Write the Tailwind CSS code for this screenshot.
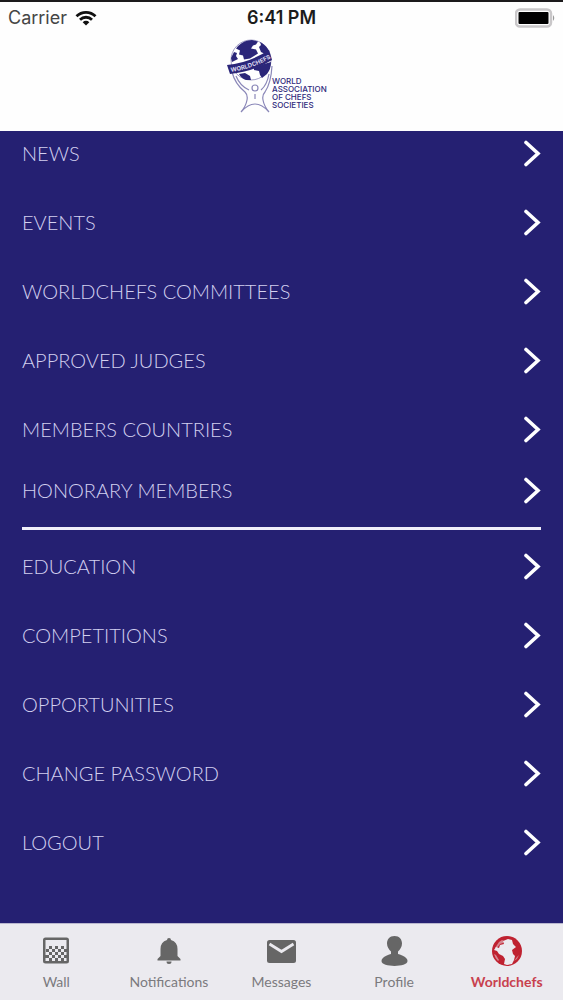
<!DOCTYPE html>
<html lang="en">
<head>
  <meta charset="UTF-8">
  <meta name="viewport" content="width=device-width, initial-scale=1.0">
  <title>Worldchefs</title>
  <script src="https://cdn.jsdelivr.net/npm/@tailwindcss/browser@4"></script>
</head>
<body class="min-h-screen flex flex-col bg-[#252072] font-['Lato',sans-serif]">
  <!-- Shared icons -->
  <svg class="hidden">
    <symbol id="chevron" viewBox="0 0 18 28">
      <path d="M3 3.500 15 14.500 3 25.500" fill="none" stroke="currentColor" stroke-width="3.600" stroke-linecap="round" stroke-linejoin="miter"/>
    </symbol>
  </svg>

  <!-- Header -->
  <header class="bg-[#fefefe] border-t-2 border-[#1c1a1c] h-[131px]">
    <div class="grid grid-cols-3 items-center h-8 px-2 font-['Inter',sans-serif] text-[#1c1c1c]">
      <div class="flex items-center gap-2">
        <span class="text-lg text-[#454545]">Carrier</span>
        <svg class="w-[22px] h-4" viewBox="0 0 22 16" fill="none" stroke="#111" stroke-width="2.8">
          <path d="M1.5 6.2a13.5 13.5 0 0 1 19 0"/>
          <path d="M5 9.7a8.6 8.6 0 0 1 12 0"/>
          <path d="M11 15.5 7.7 12.2a4.7 4.7 0 0 1 6.6 0z" fill="#111" stroke="none"/>
        </svg>
      </div>
      <span class="text-center text-lg font-semibold">6:41 PM</span>
      <svg class="justify-self-end w-10 h-5" viewBox="0 0 40 20">
        <rect x="1" y="1.5" width="35" height="17" rx="4" fill="#fff" stroke="#c9c7c9" stroke-width="2.5"/>
        <rect x="3.5" y="4" width="30" height="12" rx="1" fill="#000"/>
        <path d="M38 7q2.500 3 0 6z" fill="#999"/>
      </svg>
    </div>
    <div class="flex justify-center pt-1">
      <svg class="w-[110px] h-[76px]" viewBox="0 0 110 76" role="img" aria-label="World Association of Chefs Societies">
        <g fill="none" stroke="#8a87b8" stroke-width="1.200">
          <path d="M5 34Q8 46 18 54q3 3 2 8-1 6-6 12 7-8 14-8t14 8q-5-6-6-12-1-5 2-8 6-9 7-26"/>
          <path d="M9 38q4 10 13 14M42 36q-2 11-8 16"/>
          <circle cx="28" cy="50" r="3" fill="#fff"/>
          <path d="M28 56v5"/>
        </g>
        <circle cx="24" cy="22" r="20" fill="#fff" stroke="#8a87b8" stroke-width=".8"/>
        <g fill="#2b2679">
          <path d="M11 8Q17 2 25 2l6 1.500-2 3-3 1-2 3 5 1 2 4-8 5-6 1-1-4-4-1 1-4-4-2z"/>
          <path d="M33 4q6 3 9 9l-4 3-4-2-2-5 2-2z"/>
          <path d="M4 20l3-6 3 1-1 3 2 3-6 3z"/>
          <path d="M12 36l6-1 5 3 1 4-5 0q-5-2-7-6z"/>
          <path d="M27 30l10-4 7-2q0 7-4 12l-5 4-2-3-1-4-5-1z"/>
        </g>
        <path d="M0 27Q22 25 42 12l3 10Q26 34 3 36z" fill="#2b2679"/>
        <path id="band" d="M4 34Q25 31 46 19" fill="none"/>
        <text font-family="Inter, sans-serif" font-size="6" font-weight="700" fill="#dddbf0"><textPath href="#band">WORLDCHEFS</textPath></text>
        <g font-family="Inter, sans-serif" font-size="8" font-weight="500" fill="#2f2a7c">
          <text x="45" y="46">WORLD</text>
          <text x="45" y="54">ASSOCIATION</text>
          <text x="45" y="62">OF CHEFS</text>
          <text x="45" y="70">SOCIETIES</text>
        </g>
      </svg>
    </div>
  </header>

  <!-- Menu -->
  <main class="flex-1 px-[22px] text-xl font-light text-[#d3d0f0]">
    <nav aria-label="Menu">
      <div class="flex flex-col gap-[25px]">
        <a href="#news" class="flex items-center justify-between h-11">NEWS<svg class="w-[18px] h-7 text-white"><use href="#chevron"/></svg></a>
        <a href="#events" class="flex items-center justify-between h-11">EVENTS<svg class="w-[18px] h-7 text-white"><use href="#chevron"/></svg></a>
        <a href="#committees" class="flex items-center justify-between h-11">WORLDCHEFS COMMITTEES<svg class="w-[18px] h-7 text-white"><use href="#chevron"/></svg></a>
        <a href="#judges" class="flex items-center justify-between h-11">APPROVED JUDGES<svg class="w-[18px] h-7 text-white"><use href="#chevron"/></svg></a>
        <a href="#countries" class="flex items-center justify-between h-11">MEMBERS COUNTRIES<svg class="w-[18px] h-7 text-white"><use href="#chevron"/></svg></a>
        <a href="#honorary" class="flex items-center justify-between h-11 -mt-2">HONORARY MEMBERS<svg class="w-[18px] h-7 text-white"><use href="#chevron"/></svg></a>
      </div>
      <hr class="mt-[15px] mb-[14px] border-t-3 border-[#f0effa]">
      <div class="flex flex-col gap-[25px]">
        <a href="#education" class="flex items-center justify-between h-11">EDUCATION<svg class="w-[18px] h-7 text-white"><use href="#chevron"/></svg></a>
        <a href="#competitions" class="flex items-center justify-between h-11">COMPETITIONS<svg class="w-[18px] h-7 text-white"><use href="#chevron"/></svg></a>
        <a href="#opportunities" class="flex items-center justify-between h-11">OPPORTUNITIES<svg class="w-[18px] h-7 text-white"><use href="#chevron"/></svg></a>
        <a href="#password" class="flex items-center justify-between h-11">CHANGE PASSWORD<svg class="w-[18px] h-7 text-white"><use href="#chevron"/></svg></a>
        <a href="#logout" class="flex items-center justify-between h-11">LOGOUT<svg class="w-[18px] h-7 text-white"><use href="#chevron"/></svg></a>
      </div>
    </nav>
  </main>

  <!-- Tab bar -->
  <footer class="bg-[#ebeaef] border-t border-[#b9b7cf]">
    <nav class="grid grid-cols-5 h-[76px] pt-3 text-sm text-[#7b7a7e]" aria-label="Tabs">
      <a href="#wall" class="flex flex-col items-center gap-1">
        <svg class="w-8 h-8" viewBox="0 0 32 32" fill="#666">
          <path fill-rule="evenodd" d="M5.500 1.500h21a2.500 2.500 0 0 1 2.500 2.500v21a2.500 2.500 0 0 1-2.500 2.500h-21A2.500 2.500 0 0 1 3 25v-21A2.500 2.500 0 0 1 5.500 1.500zM5.500 4v21h21V4z"/>
          <path d="M9 10h3v3H9zM15 10h3v3h-3zM21 10h3v3h-3zM6 13h3v3H6zM12 13h3v3h-3zM18 13h3v3h-3zM24 13h3v3h-3zM9 16h3v3H9zM15 16h3v3h-3zM21 16h3v3h-3zM5 19h4v3H5zM12 19h3v3h-3zM18 19h3v3h-3zM24 19h3v3h-3zM9 22h3v4H9zM15 22h3v4h-3zM21 22h3v4h-3z"/>
        </svg>
        Wall
      </a>
      <a href="#notifications" class="flex flex-col items-center gap-1">
        <svg class="w-8 h-8" viewBox="0 0 32 32" fill="#666">
          <path d="M16 2a2 2 0 0 1 2 2q6.500 2 6.500 9v7l3 3v1.500h-23V23l3-3v-7q0-7 6.500-9a2 2 0 0 1 2-2z"/>
          <path d="M13.500 25.500h5a2.500 2.500 0 0 1-5 0z"/>
        </svg>
        Notifications
      </a>
      <a href="#messages" class="flex flex-col items-center gap-1">
        <svg class="w-8 h-8" viewBox="0 0 32 32">
          <rect x="2" y="4" width="29" height="23" rx="2.500" fill="#666"/>
          <path d="M4.500 8 16.500 15.500 28.500 8" fill="none" stroke="#ebeaef" stroke-width="2.800"/>
        </svg>
        Messages
      </a>
      <a href="#profile" class="flex flex-col items-center gap-1">
        <svg class="w-8 h-8" viewBox="0 0 32 32" fill="#666">
          <path d="M16.500 0c5 0 7.500 3.500 7.500 7.500 0 3.500-2 6-4 8v2.500c5 1.500 9.500 3.500 9.500 7 0 6.500-26 6.500-26 0 0-3.500 4.500-5.500 9.500-7v-2.500c-2-2-4-4.500-4-8 0-4 2.500-7.500 7.500-7.500z"/>
        </svg>
        Profile
      </a>
      <a href="#worldchefs" aria-current="page" class="flex flex-col items-center gap-1 font-bold text-[#c8414e]">
        <svg class="w-8 h-8" viewBox="0 0 32 32">
          <circle cx="16" cy="15" r="15" fill="#bf2231"/>
          <path d="M17 3l4 1 1 4 3 3-4 3 1 4 2 2-1 4-2 4-5 1-3-1 1-5-2-3-4-2-2-3-3-1 2-3 3 1 1-3 4-1-1-3z" fill="#ebeaef"/>
          <path d="M8 6l3-2 2 1-1 2-3 1-3 4-2 0zM3 18l2 1 3 5-1 1q-3-3-4-7zM26 21l2-2-2 4-3 2z" fill="#ebeaef" fill-opacity=".5"/>
        </svg>
        Worldchefs
      </a>
    </nav>
  </footer>
</body>
</html>
